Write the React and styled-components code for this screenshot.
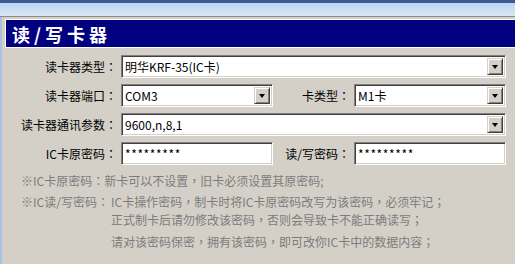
import React from 'react'
import styled, { createGlobalStyle } from 'styled-components'

const GlobalStyle = createGlobalStyle`
  html, body {
    margin: 0;
    padding: 0;
    background: #d4d0c8;
    overflow: hidden;
  }
  body {
    font-family: "Noto Sans CJK TC", "Noto Sans CJK SC", "Liberation Sans", sans-serif;
    font-size: 12px;
  }
`

const Window = styled.div`
  width: 515px;
  height: 264px;
  background: #d4d0c8;
  border-left: 2px solid #a9c0e2;
  box-sizing: border-box;
`

const TopBand = styled.div`
  height: 13px;
  border-top: 3px solid #3d5d92;
  background: linear-gradient(#bcd4f2, #dbe7f6);
  border-bottom: 1px solid #8c8c8c;
  margin-left: -2px;
`

const TitleBar = styled.div`
  margin: 2px 0 0 3px;
  height: 27px;
  background: #000080;
  border: 1px solid #ffffff;
  border-right: none;
  color: #ffffff;
  font-size: 18px;
  font-weight: bold;
  letter-spacing: 4px;
  display: flex;
  align-items: center;
  padding-left: 6px;
  line-height: 1;
`

const Form = styled.div`
  display: grid;
  grid-template-columns: 115px 152px 73px 152px;
  column-gap: 4px;
  row-gap: 6px;
  margin-top: 7px;
  align-items: center;
`

const Label = styled.div`
  text-align: right;
  white-space: nowrap;
  color: #000;
  font-size: 12px;
`

const Field = styled.div`
  grid-column: ${p => p.$span || 'auto'};
  height: 23px;
  box-sizing: border-box;
  background: #fff;
  border: 1px solid;
  border-color: #808080 #ffffff #ffffff #808080;
  box-shadow: inset 1px 1px #404040, inset -1px -1px #d4d0c8;
  display: flex;
  align-items: stretch;
  padding: 2px;
`

const Value = styled.div`
  flex: 1;
  display: flex;
  align-items: center;
  padding-left: 1px;
  font-size: 12px;
  color: #000;
  white-space: nowrap;
  letter-spacing: ${p => (p.$mask ? '0.6px' : '0')};
`

const DropButton = styled.div`
  width: 16px;
  box-sizing: border-box;
  background: #d4d0c8;
  border: 1px solid;
  border-color: #d4d0c8 #404040 #404040 #d4d0c8;
  box-shadow: inset 1px 1px #ffffff, inset -1px -1px #808080;
  display: flex;
  align-items: center;
  justify-content: center;
`

const Arrow = styled.div`
  width: 0;
  height: 0;
  border-left: 3.5px solid transparent;
  border-right: 3.5px solid transparent;
  border-top: 4px solid #000;
  margin-top: 1px;
`

const Notes = styled.div`
  padding-left: 19px;
  color: #7c7c7c;
  font-size: 12px;
  display: flex;
  flex-direction: column;
`

const NoteLine = styled.div`
  height: 14px;
  line-height: 14px;
  margin-top: ${p => p.$gap}px;
  display: flex;
  white-space: nowrap;
  padding-left: ${p => p.$indent || 0}px;
`

const Lead = styled.span`
  width: 90px;
  flex: none;
`

const Combo = ({ span, children }) => (
  <Field $span={span}>
    <Value>{children}</Value>
    <DropButton>
      <Arrow />
    </DropButton>
  </Field>
)

export default function App() {
  return (
    <>
      <GlobalStyle />
      <Window>
        <TopBand />
        <TitleBar>读/写卡器</TitleBar>
        <Form>
          <Label>读卡器类型：</Label>
          <Combo span="2 / 5">明华KRF-35(IC卡)</Combo>

          <Label>读卡器端口：</Label>
          <Combo>COM3</Combo>
          <Label>卡类型：</Label>
          <Combo>M1卡</Combo>

          <Label>读卡器通讯参数：</Label>
          <Combo span="2 / 5">9600,n,8,1</Combo>

          <Label>IC卡原密码：</Label>
          <Field>
            <Value $mask>*********</Value>
          </Field>
          <Label>读/写密码：</Label>
          <Field>
            <Value $mask>*********</Value>
          </Field>
        </Form>
        <Notes>
          <NoteLine $gap={9}>※IC卡原密码：新卡可以不设置，旧卡必须设置其原密码;</NoteLine>
          <NoteLine $gap={7}>
            <Lead>※IC读/写密码：</Lead>IC卡操作密码，制卡时将IC卡原密码改写为该密码，必须牢记；
          </NoteLine>
          <NoteLine $gap={4} $indent={90}>正式制卡后请勿修改该密码，否则会导致卡不能正确读写；</NoteLine>
          <NoteLine $gap={8} $indent={90}>请对该密码保密，拥有该密码，即可改你IC卡中的数据内容；</NoteLine>
        </Notes>
      </Window>
    </>
  )
}
